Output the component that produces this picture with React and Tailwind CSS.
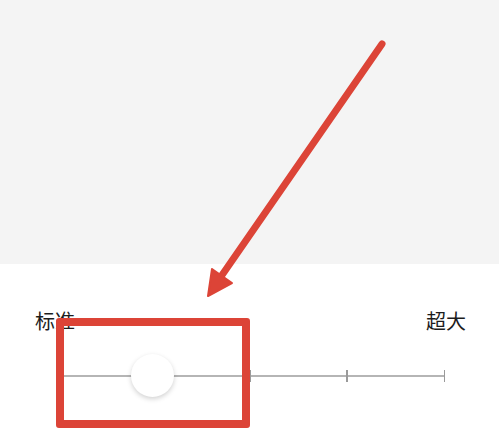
import React from "react";

export default function App() {
  return (
    <div
      className="relative w-[499px] h-[429px] overflow-hidden bg-white"
      style={{ fontFamily: '"Noto Sans CJK SC", "Noto Sans", sans-serif' }}
    >
      <div className="h-[264px] bg-[#f4f4f4]" />
      <div className="flex flex-col">
        <div className="flex justify-between pl-[35px] pr-[33px] pt-[43px] text-[20px] leading-[28px] text-[#1c1c1c]">
          <span>标准</span>
          <span>超大</span>
        </div>
        {/* slider */}
        <div className="relative mt-[19px] ml-[63px] flex h-[44px] w-[382px] items-center">
          <div className="flex h-[12px] w-full items-center">
            <div className="h-[1.5px] w-[89px] bg-[#b5b5b5]" />
            <div className="flex h-[12px] flex-1 items-center justify-between">
              {[0, 1, 2, 3].map((i) => (
                <React.Fragment key={i}>
                  <div className="h-[12px] w-[1.5px] bg-[#9a9a9a]" />
                  {i < 3 && <div className="h-[1.5px] flex-1 bg-[#b5b5b5]" />}
                </React.Fragment>
              ))}
            </div>
          </div>
          {/* knob overlays the track */}
          <div className="absolute left-[68px] top-0 h-[43px] w-[43px] rounded-full bg-white shadow-[0_2px_5px_rgba(0,0,0,0.18)]" />
        </div>
      </div>

      {/* red highlight box (annotation overlay) */}
      <div className="absolute left-[56px] top-[318px] h-[110px] w-[194px] rounded-[3px] border-[8px] border-[#dc4437]" />

      {/* arrow (annotation overlay) */}
      <svg className="absolute inset-0" width="499" height="429" viewBox="0 0 499 429">
        <line x1="382" y1="44" x2="220" y2="278" stroke="#dc4437" strokeWidth="7" strokeLinecap="round" />
        <polygon points="208,296 212,269 232,283" fill="#dc4437" stroke="#dc4437" strokeWidth="2" strokeLinejoin="round" />
      </svg>
    </div>
  );
}
